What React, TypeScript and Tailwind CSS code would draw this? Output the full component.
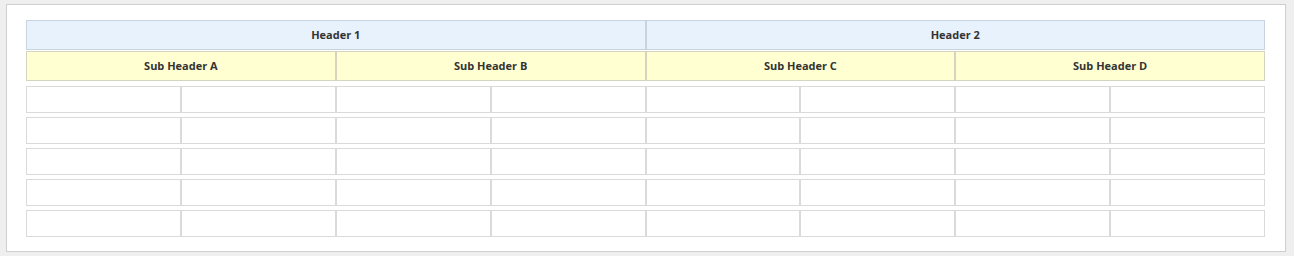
const subHeaders = ['Sub Header A', 'Sub Header B', 'Sub Header C', 'Sub Header D'];
const rows = [0, 1, 2, 3, 4];
const cols = [0, 1, 2, 3, 4, 5, 6, 7];

export default function App() {
  return (
    <div
      className="h-[256px] w-[1294px] bg-[#efefef] pl-[6px] pt-[4px]"
      style={{ fontFamily: '"Open Sans", "Noto Sans", sans-serif' }}
    >
      <div className="h-[248px] w-[1280px] border border-[#cfcfcf] bg-white pl-[19px] pr-[20px] pt-[15px]">
        {/* Top header */}
        <div className="flex">
          <div className="flex h-[30px] flex-1 items-center justify-center border border-[#c9d3de] bg-[#e8f2fd] text-[11px] font-bold text-[#333]">
            Header 1
          </div>
          <div className="flex h-[30px] flex-1 items-center justify-center border border-[#c9d3de] bg-[#e8f2fd] text-[11px] font-bold text-[#333]">
            Header 2
          </div>
        </div>

        {/* Sub headers */}
        <div className="mt-px flex">
          {subHeaders.map((s) => (
            <div
              key={s}
              className="flex h-[30px] flex-1 items-center justify-center border border-[#d4d4c0] bg-[#ffffd2] text-[11px] font-bold text-[#333]"
            >
              {s}
            </div>
          ))}
        </div>

        {/* Body rows */}
        <div className="mt-[5px] flex flex-col gap-[4px]">
          {rows.map((r) => (
            <div key={r} className="flex">
              {cols.map((c) => (
                <div key={c} className="h-[27px] flex-1 border border-[#dadada] bg-white" />
              ))}
            </div>
          ))}
        </div>
      </div>
    </div>
  );
}
